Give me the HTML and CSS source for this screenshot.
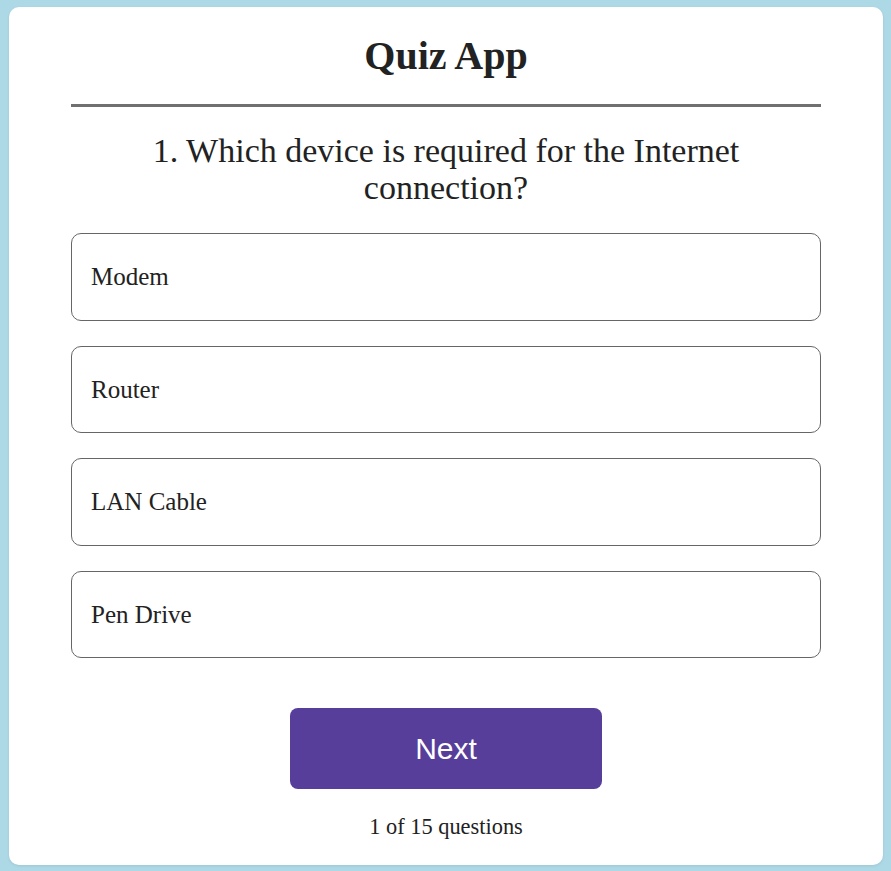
FILE: index.html
```html
<!DOCTYPE html>
<html lang="en">
<head>
<meta charset="utf-8">
<title>Quiz App</title>
<link rel="stylesheet" href="styles.css">
</head>
<body>
<div class="app">
  <h1 class="title">Quiz App</h1>
  <hr class="divider">
  <div class="quiz">
    <h2 class="question">1. Which device is required for the Internet connection?</h2>
    <div class="options">
      <button class="option">Modem</button>
      <button class="option">Router</button>
      <button class="option">LAN Cable</button>
      <button class="option">Pen Drive</button>
    </div>
    <button class="next">Next</button>
    <div class="counter">1 of 15 questions</div>
  </div>
</div>
</body>
</html>
```

FILE: styles.css
```css
html, body {
  margin: 0;
  height: 100%;
}
body {
  background: #add8e6;
  padding: 7px 8px 6px 9px;
  box-sizing: border-box;
  font-family: "Liberation Serif", "Times New Roman", serif;
  color: #222;
}
.app {
  background: #fff;
  border-radius: 10px;
  height: 100%;
  box-sizing: border-box;
  padding: 26px 62px 25px 62px;
  box-shadow: 0 1px 3px rgba(0, 0, 0, 0.08);
}
.title {
  margin: 0;
  font-size: 40px;
  font-weight: bold;
  text-align: center;
  line-height: 46px;
}
.divider {
  margin: 25px 0 0 0;
  border: 0;
  height: 3px;
  background: #707070;
}
.quiz {
  display: flex;
  flex-direction: column;
  align-items: center;
}
.question {
  margin: 25px 0 0 0;
  font-size: 34px;
  font-weight: normal;
  text-align: center;
  line-height: 37px;
}
.options {
  margin-top: 27px;
  width: 100%;
  display: flex;
  flex-direction: column;
  gap: 25px;
}
.option {
  display: block;
  width: 100%;
  text-align: left;
  background: #fff;
  border: 1px solid #666;
  border-radius: 10px;
  padding: 29px 20px 29px 19px;
  font-family: "Liberation Serif", "Times New Roman", serif;
  font-size: 25px;
  line-height: 27.6px;
  color: #222;
}
.next {
  margin-top: 50px;
  width: 312px;
  height: 81px;
  border: 0;
  border-radius: 8px;
  background: #563e9a;
  color: #fff;
  font-family: "Liberation Sans", Arial, sans-serif;
  font-size: 30px;
}
.counter {
  margin-top: 25px;
  font-size: 22.4px;
  line-height: 25px;
}
```
